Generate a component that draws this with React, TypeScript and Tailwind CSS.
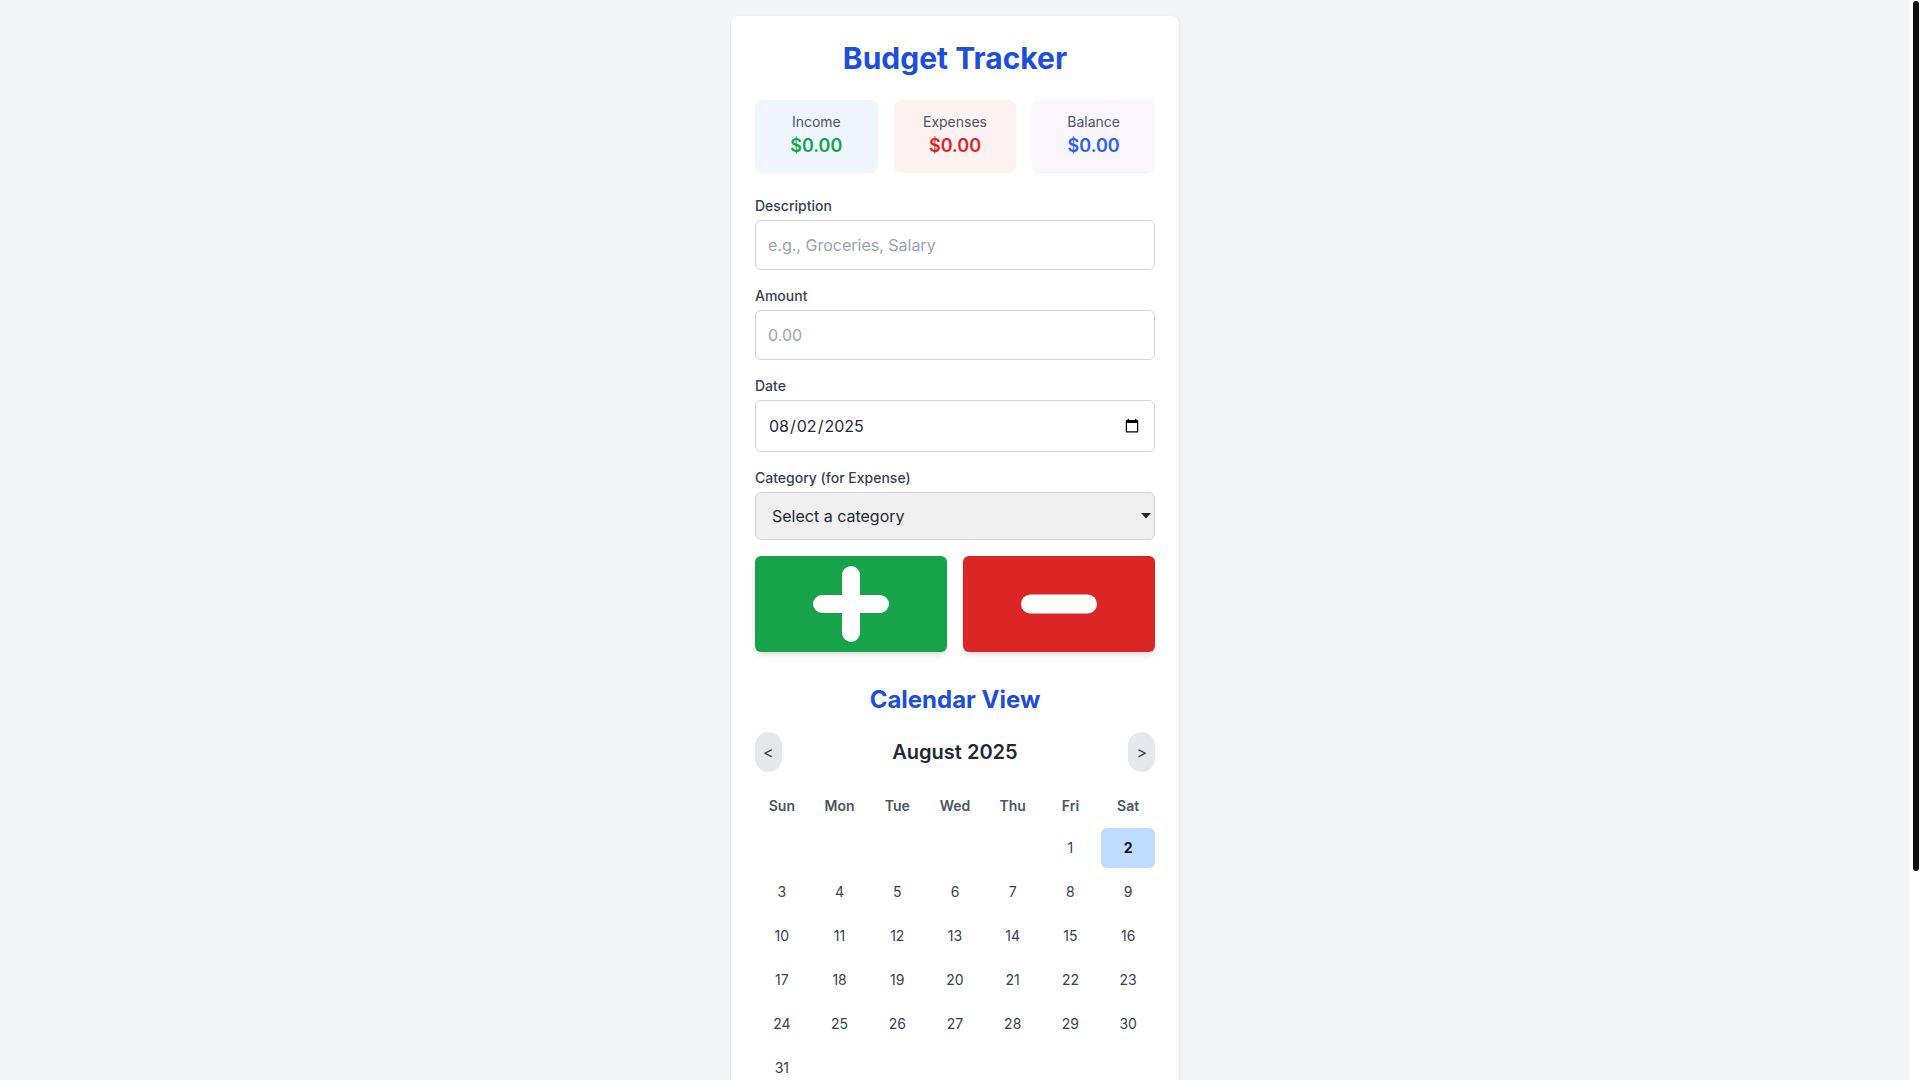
import { useState } from "react";

const WEEKDAYS = ["Sun", "Mon", "Tue", "Wed", "Thu", "Fri", "Sat"];
const MONTHS = [
  "January", "February", "March", "April", "May", "June",
  "July", "August", "September", "October", "November", "December",
];

function PlusIcon() {
  return (
    <svg width="76" height="76" viewBox="0 0 76 76" fill="none">
      <path d="M9 38h58M38 9v58" stroke="white" strokeWidth="18" strokeLinecap="round" />
    </svg>
  );
}

function MinusIcon() {
  return (
    <svg width="76" height="20" viewBox="0 0 76 20" fill="none">
      <path d="M9.5 10h57" stroke="white" strokeWidth="19" strokeLinecap="round" />
    </svg>
  );
}

export default function App() {
  const [year, setYear] = useState(2025);
  const [month, setMonth] = useState(7);
  const [date, setDate] = useState("2025-08-02");
  const [description, setDescription] = useState("");
  const [amount, setAmount] = useState("");
  const [category, setCategory] = useState("");

  const firstDay = new Date(year, month, 1).getDay();
  const daysInMonth = new Date(year, month + 1, 0).getDate();
  const cells: (number | null)[] = [];
  for (let i = 0; i < firstDay; i++) cells.push(null);
  for (let d = 1; d <= daysInMonth; d++) cells.push(d);

  const selected = new Date(date + "T00:00:00");

  const prevMonth = () => {
    if (month === 0) {
      setMonth(11);
      setYear(year - 1);
    } else setMonth(month - 1);
  };
  const nextMonth = () => {
    if (month === 11) {
      setMonth(0);
      setYear(year + 1);
    } else setMonth(month + 1);
  };

  return (
    <div className="min-h-screen bg-[#f3f4f6] font-['Inter',sans-serif] py-4 pl-4 pr-[26px]">
      {/* page scrollbar */}
      <div className="fixed top-0 right-0 h-screen w-[10px] bg-white">
        <div className="ml-[3px] mt-[1px] w-[6px] h-[870px] rounded-full bg-[#111111]" />
      </div>

      <div className="max-w-md mx-auto bg-white rounded-lg shadow-sm p-6">
        <h1 className="text-3xl font-bold text-center text-[#1d4ed8] mb-6">Budget Tracker</h1>

        <div className="grid grid-cols-3 gap-4 mb-6 text-center">
          <div className="bg-[#eff6ff] p-3 rounded-lg shadow-xs">
            <p className="text-sm text-[#4b5563]">Income</p>
            <p className="text-lg font-semibold text-[#16a34a]">$0.00</p>
          </div>
          <div className="bg-[#fef2f2] p-3 rounded-lg shadow-xs">
            <p className="text-sm text-[#4b5563]">Expenses</p>
            <p className="text-lg font-semibold text-[#dc2626]">$0.00</p>
          </div>
          <div className="bg-[#faf5ff] p-3 rounded-lg shadow-xs">
            <p className="text-sm text-[#4b5563]">Balance</p>
            <p className="text-lg font-semibold text-[#2563eb]">$0.00</p>
          </div>
        </div>

        <div className="space-y-4">
          <div>
            <label className="block text-sm font-medium text-[#374151] mb-1">Description</label>
            <input
              type="text"
              value={description}
              onChange={(e) => setDescription(e.target.value)}
              placeholder="e.g., Groceries, Salary"
              className="w-full p-3 border border-[#d1d5db] rounded-md text-[#1f2937] placeholder:text-[#9ca3af]"
            />
          </div>
          <div>
            <label className="block text-sm font-medium text-[#374151] mb-1">Amount</label>
            <input
              type="number"
              value={amount}
              onChange={(e) => setAmount(e.target.value)}
              placeholder="0.00"
              className="w-full p-3 border border-[#d1d5db] rounded-md text-[#1f2937] placeholder:text-[#9ca3af]"
            />
          </div>
          <div>
            <label className="block text-sm font-medium text-[#374151] mb-1">Date</label>
            <input
              type="date"
              value={date}
              onChange={(e) => setDate(e.target.value)}
              className="w-full h-[52px] px-3 border border-[#d1d5db] rounded-md text-[#1f2937]"
            />
          </div>
          <div>
            <label className="block text-sm font-medium text-[#374151] mb-1">Category (for Expense)</label>
            <div className="relative">
              <select
                value={category}
                onChange={(e) => setCategory(e.target.value)}
                className="w-full h-12 pl-4 pr-8 appearance-none border border-[#d1d5db] rounded-md bg-[#efefef] text-[#1f2937]"
              >
                <option value="">Select a category</option>
                <option value="food">Food</option>
                <option value="transport">Transport</option>
                <option value="bills">Bills</option>
                <option value="other">Other</option>
              </select>
              <svg
                className="absolute right-1 top-1/2 -translate-y-1/2 pointer-events-none"
                width="10"
                height="6"
                viewBox="0 0 10 6"
              >
                <path d="M0 0h10L5 5.5z" fill="#1f2937" />
              </svg>
            </div>
          </div>

          <div className="grid grid-cols-2 gap-4">
            <button className="h-24 flex items-center justify-center bg-[#16a34a] hover:bg-[#15803d] rounded-md shadow-md">
              <PlusIcon />
            </button>
            <button className="h-24 flex items-center justify-center bg-[#dc2626] hover:bg-[#b91c1c] rounded-md shadow-md">
              <MinusIcon />
            </button>
          </div>
        </div>

        <h2 className="text-2xl font-bold text-center text-[#1d4ed8] mt-8 mb-4">Calendar View</h2>

        <div className="flex items-center justify-between mb-4">
          <button onClick={prevMonth} className="px-2 py-2 rounded-full bg-[#e5e7eb] text-[#374151]">
            &lt;
          </button>
          <h3 className="text-xl font-semibold text-[#1f2937]">
            {MONTHS[month]} {year}
          </h3>
          <button onClick={nextMonth} className="px-2 py-2 rounded-full bg-[#e5e7eb] text-[#374151]">
            &gt;
          </button>
        </div>

        <div className="grid grid-cols-7 gap-1 text-center">
          {WEEKDAYS.map((d) => (
            <div key={d} className="p-2 text-sm font-semibold text-[#4b5563]">
              {d}
            </div>
          ))}
          {cells.map((d, i) => {
            const isSel =
              d !== null &&
              selected.getFullYear() === year &&
              selected.getMonth() === month &&
              selected.getDate() === d;
            return (
              <div
                key={i}
                className={
                  isSel
                    ? "h-10 flex items-center justify-center text-sm rounded-md bg-[#bfdbfe] font-bold text-[#111827]"
                    : "h-10 flex items-center justify-center text-sm rounded-md text-[#374151]"
                }
              >
                {d ?? ""}
              </div>
            );
          })}
        </div>
      </div>
    </div>
  );
}
